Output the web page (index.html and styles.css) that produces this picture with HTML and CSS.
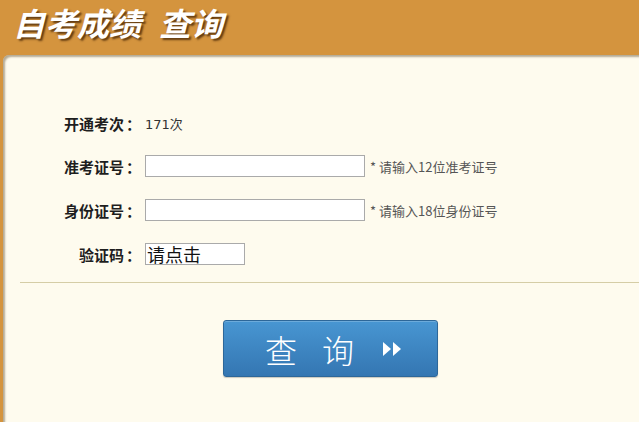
FILE: index.html
```html
<!DOCTYPE html>
<html lang="zh-CN">
<head>
  <meta charset="UTF-8" />
  <title>自考成绩查询</title>
  <link rel="stylesheet" href="styles.css">
</head>
<body>
  <div class="header">
    <h1>自考成绩<span class="gap"></span>查询</h1>
  </div>

  <div class="panel">
    <form class="form">
      <div class="row">
        <label>开通考次<span class="colon">：</span></label>
        <span class="value">171次</span>
      </div>
      <div class="row">
        <label for="zkz">准考证号<span class="colon">：</span></label>
        <input type="text" id="zkz" class="field">
        <span class="hint">* 请输入12位准考证号</span>
      </div>
      <div class="row">
        <label for="sfz">身份证号<span class="colon">：</span></label>
        <input type="text" id="sfz" class="field">
        <span class="hint">* 请输入18位身份证号</span>
      </div>
      <div class="row">
        <label for="yzm">验证码<span class="colon">：</span></label>
        <input type="text" id="yzm" class="captcha" value="请点击">
      </div>
    </form>

    <hr class="divider">

    <div class="actions">
      <button type="button" class="btn">
        <span>查</span><span>询</span>
        <svg width="20" height="16" viewBox="0 0 20 16">
          <polygon points="1,1 9,8 1,15" fill="#fff"/>
          <polygon points="11,1 19,8 11,15" fill="#fff"/>
        </svg>
      </button>
    </div>
  </div>
</body>
</html>
```

FILE: styles.css
```css
body {
  margin: 0;
  background: #d4943e;
  font-family: "Noto Sans CJK SC", "Noto Sans", sans-serif;
  height: 422px;
  overflow: hidden;
}

.header {
  height: 55px;
  padding-left: 13px;
}

.header h1 {
  margin: 0;
  font-size: 32px;
  line-height: 44px;
  font-weight: 700;
  font-style: italic;
  color: #fff;
  text-shadow: 2px 2px 2px rgba(60, 30, 0, 0.75);
}

.header .gap {
  display: inline-block;
  width: 18px;
}

.panel {
  margin-left: 3px;
  height: 367px;
  background: #fefbee;
  border-top-left-radius: 6px;
  box-shadow: inset 2px 2px 2px rgba(90, 70, 40, 0.45);
}

.form {
  display: flex;
  flex-direction: column;
  gap: 22px;
  padding-top: 59px;
}

.row {
  display: flex;
  align-items: center;
  height: 22px;
}

.row:first-child {
  height: 19px;
}

.row label {
  width: 138px;
  margin-right: 4px;
  text-align: right;
  font-size: 15px;
  font-weight: 700;
  color: #1e1e1e;
}

.colon {
  margin-left: 2px;
}

.value {
  font-size: 13px;
  color: #333;
  font-family: "DejaVu Sans", "Noto Sans CJK SC", sans-serif;
}

.field {
  width: 220px;
  height: 22px;
  box-sizing: border-box;
  border: 1px solid #aaa;
  background: #fff;
  margin: 0;
  padding: 0 3px;
}

.hint {
  margin-left: 5px;
  font-size: 13px;
  color: #555;
}

.captcha {
  width: 100px;
  height: 22px;
  box-sizing: border-box;
  border: 1px solid #aaa;
  background: #fff;
  margin: 0;
  padding: 0 1px;
  font-size: 18px;
  color: #111;
  font-family: "Noto Sans CJK SC", sans-serif;
}

.divider {
  margin: 17px 0 0 17px;
  border: 0;
  border-top: 1px solid #d5cda6;
  height: 0;
}

.actions {
  padding: 37px 0 0 220px;
}

.btn {
  width: 215px;
  height: 57px;
  border: 1px solid #2d6799;
  border-radius: 3px;
  background: linear-gradient(#4896d2, #3476b2);
  box-shadow: inset 0 1px 0 rgba(255, 255, 255, 0.2), 0 1px 1px rgba(0, 0, 0, 0.2);
  color: #fff;
  font-family: "Noto Sans CJK SC", sans-serif;
  font-size: 32px;
  font-weight: 300;
  display: flex;
  align-items: center;
  padding: 0 0 0 41px;
  cursor: pointer;
}

.btn span {
  margin-right: 25px;
  line-height: 1;
}

.btn span + span {
  margin-right: 28px;
}
```
